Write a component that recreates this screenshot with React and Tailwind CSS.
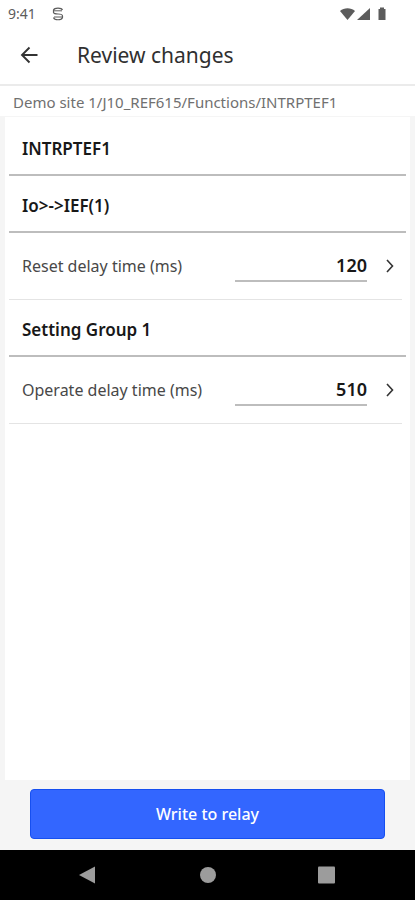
const sections = [
  { title: "INTRPTEF1", settings: [] },
  { title: "Io>->IEF(1)", settings: [{ id: "reset-delay", label: "Reset delay time (ms)", value: "120" }] },
  { title: "Setting Group 1", settings: [{ id: "operate-delay", label: "Operate delay time (ms)", value: "510" }] },
];

function StatusBar() {
  return (
    <div className="flex h-[27px] items-center justify-between pl-2 pr-7 text-[#5c5c5c]">
      <div className="flex items-center gap-4">
        <span className="text-sm">9:41</span>
        <svg className="h-4 w-3" viewBox="0 0 12 16" fill="none" stroke="currentColor" strokeWidth="1.2">
          <path d="M10.500 4C9.500 1.500 2.500 1.500 1.500 4v2.500C2 8 4 8 6 8s4.500 0 4.500 2v1.500C9.500 14.500 2.500 14.500 1.500 11.500" />
          <path d="M2 4.800h8M2 11h8" strokeWidth="1" />
        </svg>
      </div>
      <svg className="h-4 w-12" viewBox="0 0 48 16" fill="currentColor">
        <path d="M1 5C5 1.300 12 1.300 16 5L8.500 14Z" />
        <path d="M31 2v12H18Z" />
        <path d="M41 1.500h4V3h1.500v11h-7V3H41Z" />
      </svg>
    </div>
  );
}

function SettingRow({ setting }) {
  return (
    <div className="mr-1 flex h-[67px] items-center border-b border-[#e4e4e4] pl-[13px] pr-1">
      <label htmlFor={setting.id} className="flex-1 text-base text-[#484848]">
        {setting.label}
      </label>
      <input
        id={setting.id}
        type="text"
        inputMode="numeric"
        defaultValue={setting.value}
        className="h-8 w-[132px] border-b-2 border-[#bdbdbd] bg-transparent text-right text-lg font-semibold text-[#181818] outline-none"
      />
      <button type="button" aria-label={`Edit ${setting.label}`} className="ml-[15px] flex h-8 w-4 items-center justify-center">
        <svg className="h-4 w-4" viewBox="0 0 16 16" fill="none" stroke="#333" strokeWidth="1.6">
          <path d="M5 2l5.500 6L5 14" />
        </svg>
      </button>
    </div>
  );
}

export default function App() {
  return (
    <div className="flex min-h-screen flex-col bg-[#f5f5f5] font-['Noto_Sans',sans-serif]">
      <header className="border-b-2 border-[#ebebeb] bg-white">
        <StatusBar />
        <div className="flex h-[57px] items-center pl-5">
          <button type="button" aria-label="Back" className="mr-[37px] flex h-8 w-5 items-center justify-center">
            <svg className="h-5 w-5" viewBox="0 0 20 20" fill="none" stroke="#333" strokeWidth="1.9">
              <path d="M17.500 9h-15M9.500 1.500L2 9l7.500 7.500" />
            </svg>
          </button>
          <h1 className="text-[21px] text-[#303030]">Review changes</h1>
        </div>
      </header>

      <nav aria-label="Location" className="flex h-[30px] items-center bg-white pl-[13px] pt-0.5 text-[15px] text-[#707070]">
        Demo site 1/J10_REF615/Functions/INTRPTEF1
      </nav>

      <main className="mx-[5px] mt-px flex-1 bg-white px-1 pt-0.5">
        {sections.map((section) => (
          <section key={section.title}>
            <h2 className="flex h-[57px] items-center border-b-2 border-[#bdbdbd] pl-[13px] pt-1 text-[17px] font-semibold text-[#181818]">
              {section.title}
            </h2>
            {section.settings.map((setting) => (
              <SettingRow key={setting.id} setting={setting} />
            ))}
          </section>
        ))}
      </main>

      <footer className="px-[30px] pb-[11px] pt-[9px]">
        <button type="button" className="h-[50px] w-full rounded-sm border border-[#164ff0] bg-[#3366ff] text-base font-medium text-white">
          Write to relay
        </button>
      </footer>

      <nav aria-label="System" className="flex h-[50px] items-center justify-between bg-black px-[78px]">
        <button type="button" aria-label="System back">
          <svg className="h-5 w-5" viewBox="0 0 20 20" fill="#9c9c9c">
            <path d="M1 10L17 1.500v17Z" />
          </svg>
        </button>
        <button type="button" aria-label="Home">
          <svg className="h-5 w-5" viewBox="0 0 20 20" fill="#9c9c9c">
            <circle cx="10" cy="10" r="8" />
          </svg>
        </button>
        <button type="button" aria-label="Recent apps">
          <svg className="h-5 w-5" viewBox="0 0 20 20" fill="#9c9c9c">
            <rect x="1" y="1.500" width="17" height="17" rx="1" />
          </svg>
        </button>
      </nav>
    </div>
  );
}
